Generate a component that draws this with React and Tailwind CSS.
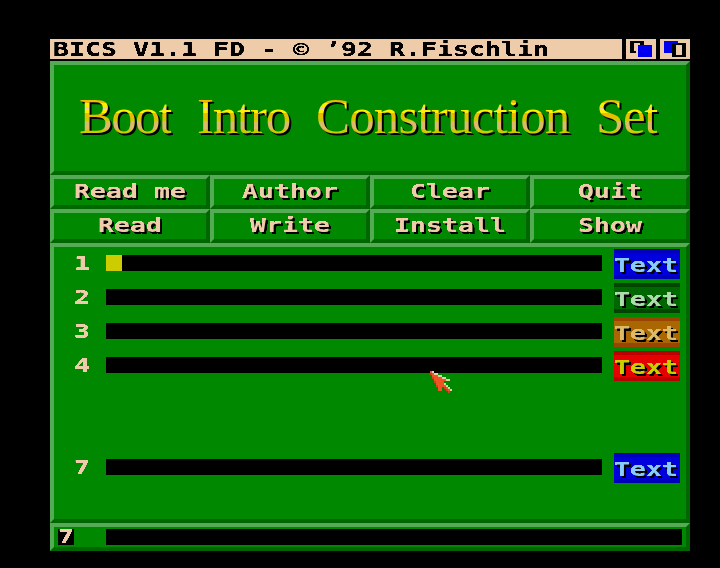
import React, { useLayoutEffect, useRef, useState } from 'react';

// Spreads a word over an exact width by adjusting its letter spacing.
function FitWord({ text, width, className = '' }) {
  const ref = useRef(null);
  const [spacing, setSpacing] = useState(0);
  useLayoutEffect(() => {
    const natural = ref.current.offsetWidth - spacing * text.length;
    setSpacing((width - natural) / text.length);
  }, [text, width]);
  return (
    <span className="inline-block whitespace-pre" style={{ width }}>
      <span ref={ref} className={`inline-block whitespace-pre ${className}`} style={{ letterSpacing: spacing }}>
        {text}
      </span>
    </span>
  );
}

// Workbench style text: the monospaced face is stretched so that every character takes 16 pixels.
function Wide({ children, className = '' }) {
  const text = String(children);
  return (
    <span className={`block h-5 [filter:url(#crisp)] ${className}`} style={{ width: text.length * 16 }}>
      <span className="block w-max origin-left scale-x-[1.3988] font-['DejaVu_Sans_Mono',monospace] text-[19px] leading-5 font-bold whitespace-pre">
        {text}
      </span>
    </span>
  );
}

const bevel = 'border-4 border-t-[#55aa55] border-l-[#55aa55] border-r-[#006600] border-b-[#006600] bg-[#008800]';

function MenuButton({ label }) {
  return (
    <button className={`flex h-[34px] w-40 items-start justify-center pt-0.5 text-left ${bevel}`}>
      <Wide className="text-[#eeccaa] [text-shadow:1.43px_2px_0_#000]">{label}</Wide>
    </button>
  );
}

const swatches = {
  blue: 'bg-[#0000dd] border-[#0000bb] text-[#88ccff]',
  green: 'bg-[#006600] border-[#004400] text-[#aaddaa]',
  orange: 'bg-[#aa6600] border-[#994400] text-[#ddbb66]',
  red: 'bg-[#e60000] border-[#bb0000] text-[#cccc00]',
};

function LineRow({ number, tone, active }) {
  return (
    <div className="flex h-[34px] items-start">
      <div className="w-[52px] pt-[6px] pl-5">
        <Wide className="text-[#eeccaa]">{number}</Wide>
      </div>
      <div className="mt-2 h-4 w-[496px] bg-black">
        {active && <div className="h-4 w-4 bg-[#cccc00]" />}
      </div>
      <button className={`mt-0.5 ml-3 flex h-[30px] w-[66px] items-start border-y-4 pt-0.5 text-left ${swatches[tone]}`}>
        <Wide className="[text-shadow:1.43px_2px_0_#000]">Text</Wide>
      </button>
    </div>
  );
}

const logoFill =
  'text-transparent bg-clip-text bg-[linear-gradient(180deg,#eebb00_0_17px,#ffee00_17px_21px,#eeccaa_21px_23px,#ffee00_23px_27px,#eebb00_27px_31px,#cccc00_31px_35px,#ddbb66_35px_43px,#cccc00_43px)]';

function Pointer() {
  // Each entry: column, row, width in double-size pixels.
  const orange = [[0, 0, 1], [0, 1, 2], [1, 2, 3], [1, 3, 5], [2, 4, 6], [2, 5, 5], [3, 6, 4], [3, 7, 5], [4, 8, 2], [7, 8, 2], [4, 9, 2], [8, 9, 2], [9, 10, 1]];
  const dark = [[0, 1, 1], [1, 3, 1], [2, 5, 1], [3, 7, 1], [7, 8, 1], [8, 9, 1], [9, 10, 1]];
  const light = [[1, 0, 1], [2, 1, 2], [4, 2, 2], [6, 3, 2], [8, 4, 2], [7, 6, 1], [8, 7, 1], [9, 8, 1], [10, 9, 1]];
  return (
    <svg className="absolute top-[371px] left-[430px]" width="22" height="22" viewBox="0 0 11 11" shapeRendering="crispEdges">
      {orange.map(([x, y, w]) => <rect key={`o${x}-${y}`} x={x} y={y} width={w} height="1" fill="#ee5522" />)}
      {dark.map(([x, y, w]) => <rect key={`d${x}-${y}`} x={x} y={y} width={w} height="1" fill="#cc4422" />)}
      {light.map(([x, y, w]) => <rect key={`l${x}-${y}`} x={x} y={y} width={w} height="1" fill="#eeccaa" />)}
    </svg>
  );
}

export default function App() {
  return (
    <div className="relative h-[568px] w-[720px] overflow-hidden bg-black pt-[39px] pl-[50px]">
      <svg className="absolute h-0 w-0">
        <filter id="crisp" x="-5%" y="-20%" width="115%" height="150%" colorInterpolationFilters="sRGB">
          <feComponentTransfer>
            <feFuncA type="linear" slope="5" intercept="-1.2" />
          </feComponentTransfer>
        </filter>
      </svg>

      <div className="w-[640px]">
        <header className="mb-0.5 flex h-5 gap-1">
          <div className="flex h-5 w-[572px] items-start bg-[#eeccaa] pl-[3px]">
            <Wide className="text-black">BICS V1.1 FD - © ’92 R.Fischlin</Wide>
          </div>
          <button className="h-5 w-[30px] bg-[#eeccaa]">
            <svg width="30" height="20" shapeRendering="crispEdges" className="block">
              <path fill="#000" d="M4 2h14v4h-4v-2H8v8h2v2H4z" />
              <path fill="#0000ee" d="M12 6h14v12H12z" />
            </svg>
          </button>
          <button className="h-5 w-[30px] bg-[#eeccaa]">
            <svg width="30" height="20" shapeRendering="crispEdges" className="block">
              <path fill="#0000ee" d="M4 2h14v12H4z" />
              <path fill="#000" d="M12 4h14v14H12z" />
              <path fill="#eeccaa" d="M16 6h6v10h-6z" />
            </svg>
          </button>
        </header>

        <div className={`h-[114px] pt-[21px] pl-[25px] ${bevel}`}>
          <h1 className="flex h-[60px] gap-[26px] font-['Liberation_Serif',serif] text-[51px] leading-[60px] [filter:drop-shadow(2px_2px_0_#000)]">
            <FitWord text="Boot" width={92} className={logoFill} />
            <FitWord text="Intro" width={93} className={logoFill} />
            <FitWord text="Construction" width={254} className={logoFill} />
            <FitWord text="Set" width={61} className={logoFill} />
          </h1>
        </div>

        <nav className="grid grid-cols-4">
          <MenuButton label="Read me" />
          <MenuButton label="Author" />
          <MenuButton label="Clear" />
          <MenuButton label="Quit" />
          <MenuButton label="Read" />
          <MenuButton label="Write" />
          <MenuButton label="Install" />
          <MenuButton label="Show" />
        </nav>

        <main className={`h-[280px] ${bevel}`}>
          <LineRow number="1" tone="blue" active />
          <LineRow number="2" tone="green" />
          <LineRow number="3" tone="orange" />
          <LineRow number="4" tone="red" />
          <div className="h-[68px]" />
          <LineRow number="7" tone="blue" />
        </main>

        <footer className={`flex h-7 items-start pt-0.5 pl-1 ${bevel}`}>
          <div className="flex h-4 w-4 items-start bg-black">
            <Wide className="-mt-[3px] text-[#eeccaa]">7</Wide>
          </div>
          <div className="ml-8 h-4 w-[576px] bg-black" />
        </footer>
      </div>

      <Pointer />
    </div>
  );
}
